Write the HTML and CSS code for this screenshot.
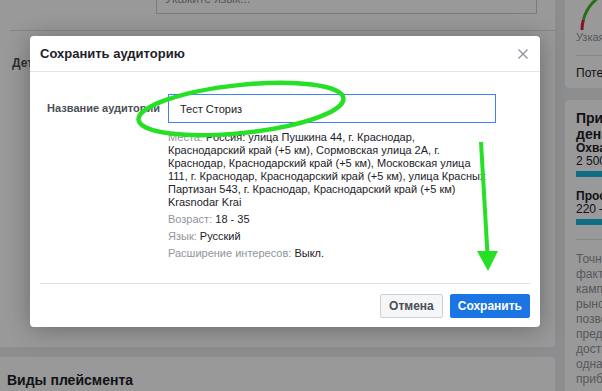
FILE: index.html
```html
<!DOCTYPE html>
<html lang="ru">
<head>
    <meta charset="UTF-8">
    <meta name="viewport" content="width=device-width, initial-scale=1.0">
    <title>Сохранить аудиторию</title>
    <link rel="stylesheet" href="styles.css">
</head>
<body>

    <div class="page">
        <div class="main-col">
            <div class="panel targeting">
                <div class="lang-input">Укажите язык...</div>
                <div class="divider"></div>
                <div class="section-title">Детальный таргетинг</div>
            </div>
            <div class="panel placements">
                <h3>Виды плейсмента</h3>
                <p>Подробный выбор плейсментов</p>
            </div>
        </div>

        <div class="side-col">
            <div class="panel side-top">
                <svg class="gauge" width="60" height="60" viewBox="0 0 60 60">
                    <path d="M17 60 A40 40 0 0 1 18.4 49.6" fill="none" stroke="#d8263b" stroke-width="3"/>
                    <path d="M18.4 49.6 A40 40 0 0 1 43 22.5" fill="none" stroke="#42b72a" stroke-width="3"/>
                </svg>
                <div class="gauge-label">Узкая</div>
                <div class="divider"></div>
                <div class="reach">Потенциальный охват: 1 400 человек</div>
            </div>
            <div class="panel side-est">
                <div class="est-title">Приблизительные результаты в<br>день</div>
                <div class="metric-name">Охват</div>
                <div class="metric-value">2 500 – 6 600</div>
                <div class="bar"></div>
                <div class="metric-name gap">Просмотры</div>
                <div class="metric-value">220 – 620</div>
                <div class="bar"></div>
                <div class="divider"></div>
                <p class="est-note">Точность приблизительных результатов<br>факторов, таких как данные о прошлых<br>кампаниях, бюджет и<br>рыночные условия. Эти данные<br>позволяют получить<br>представление о том, чего можно<br>достичь с вашим бюджетом,<br>однако это лишь<br>приблизительные<br>результаты.</p>
            </div>
        </div>
    </div>

    <!-- Modal -->
    <div class="backdrop"></div>
    <div class="modal">
        <div class="modal-head">
            <span class="modal-title">Сохранить аудиторию</span>
            <svg class="close" width="10" height="10" viewBox="0 0 10 10">
                <path d="M0.5 0.5 L9.5 9.5 M9.5 0.5 L0.5 9.5" stroke="#90949c" stroke-width="1.4"/>
            </svg>
        </div>
        <div class="modal-body">
            <label class="field-label" for="audienceName">Название аудитории</label>
            <div class="field">
                <input id="audienceName" class="text-input" type="text" value="Тест Сториз">
                <div class="summary">
                    <p class="locations"><span class="key">Места:</span> Россия: улица Пушкина 44, г. Краснодар,<br>Краснодарский край (+5 км), Сормовская улица 2А, г.<br>Краснодар, Краснодарский край (+5 км), Московская улица<br>111, г. Краснодар, Краснодарский край (+5 км), улица Красных<br>Партизан 543, г. Краснодар, Краснодарский край (+5 км)<br>Krasnodar Krai</p>
                    <p><span class="key">Возраст:</span> 18 - 35</p>
                    <p><span class="key">Язык:</span> Русский</p>
                    <p><span class="key">Расширение интересов:</span> Выкл.</p>
                </div>
            </div>
        </div>
        <div class="modal-foot">
            <button class="btn">Отмена</button>
            <button class="btn btn-primary">Сохранить</button>
        </div>
    </div>

    <!-- annotation marks -->
    <svg class="marks" width="602" height="391" viewBox="0 0 602 391">
        <ellipse cx="241" cy="109" rx="103" ry="24" transform="rotate(-6 241 109)" fill="none" stroke="#25e025" stroke-width="4.5"/>
        <line x1="481" y1="142" x2="487.5" y2="254" stroke="#25e025" stroke-width="4"/>
        <polygon points="477,251 498,251 488,271" fill="#25e025"/>
    </svg>

</body>
</html>
```

FILE: styles.css
```css
* { box-sizing: border-box; }
body {
    margin: 0;
    width: 602px;
    height: 391px;
    overflow: hidden;
    position: relative;
    background: #e9ebee;
    font-family: "Liberation Sans", Arial, sans-serif;
    color: #1d2129;
}

.page { display: flex; gap: 10px; margin: -30px 0 0 -10px; }
.main-col { width: 565px; flex: none; display: flex; flex-direction: column; gap: 10px; }
.side-col { width: 300px; flex: none; display: flex; flex-direction: column; gap: 12px; }
.panel { background: #fff; border-radius: 4px; }
.divider { height: 1px; background: #dddfe2; }

/* left column */
.targeting { height: 377px; padding: 12px 0 0 20px; }
.lang-input {
    margin-left: 146px;
    width: 381px;
    height: 32px;
    border: 1px solid #ccd0d5;
    padding: 9px 8px;
    font-size: 12px;
    color: #90949c;
}
.targeting .divider { margin-top: 16px; }
.section-title { margin: 24px 0 0 2px; font-size: 12px; line-height: 16px; font-weight: bold; color: #4b4f56; }

.placements { height: 60px; padding: 14px 0 0 17px; }
.placements h3 { margin: 0; font-size: 14px; line-height: 18px; }
.placements p { margin: 3px 0 0; font-size: 12px; }

/* right column */
.side-top { height: 118px; padding: 0 11px; }
.gauge { display: block; margin-left: -11px; }
.gauge-label { font-size: 11px; line-height: 14px; color: #90949c; }
.side-top .divider { margin-top: 11px; }
.reach { margin-top: 10px; font-size: 12px; line-height: 14px; }

.side-est { height: 320px; padding: 10px 11px; }
.est-title { font-size: 14px; line-height: 16px; font-weight: bold; }
.metric-name { font-size: 12px; line-height: 13px; font-weight: bold; }
.metric-name.gap { margin-top: 13px; }
.metric-value { font-size: 12px; line-height: 13px; }
.bar { margin-top: 3px; height: 6px; width: 180px; background: #1cb6e0; }
.side-est .divider { margin-top: 14px; }
.est-note { margin: 12px 0 0; font-size: 12px; line-height: 15px; color: #90949c; }

/* modal */
.backdrop { position: absolute; inset: 0; background: rgba(0, 0, 0, 0.4); }
.modal {
    position: absolute;
    left: 30px;
    top: 36px;
    width: 510px;
    height: 291px;
    background: #fff;
    border-radius: 4px;
    box-shadow: 0 2px 24px rgba(0, 0, 0, 0.3);
    display: flex;
    flex-direction: column;
}
.modal-head {
    height: 36px;
    padding: 0 12px 0 10px;
    border-bottom: 1px solid #e5e5e5;
    display: flex;
    align-items: center;
    justify-content: space-between;
}
.modal-title { font-size: 13px; font-weight: bold; color: #1d2129; }

.modal-body {
    flex: 1;
    padding: 22px 44px 0 10px;
    display: grid;
    grid-template-columns: 120px 1fr;
    column-gap: 8px;
    align-content: start;
}
.field-label { text-align: right; white-space: nowrap; line-height: 29px; font-size: 11px; font-weight: bold; color: #4b4f56; }
.text-input {
    display: block;
    width: 100%;
    height: 29px;
    margin: 0;
    border: 1px solid #4080ff;
    border-radius: 0;
    padding: 0 11px;
    font-family: inherit;
    font-size: 11px;
    color: #1d2129;
    outline: none;
}
.summary { margin-top: 8px; font-size: 11px; line-height: 13px; }
.summary p { margin: 4px 0 0; }
.summary p:first-child { margin-top: 0; }
.summary .locations { white-space: nowrap; }
.key { color: #90949c; }

.modal-foot {
    margin: 0 10px;
    padding: 10px 0 9px;
    border-top: 1px solid #dddfe2;
    display: flex;
    justify-content: flex-end;
    gap: 7px;
}
.btn {
    height: 24px;
    padding: 0 8px;
    border: 1px solid #ccd0d5;
    border-radius: 2px;
    background: #f5f6f7;
    font-family: inherit;
    font-size: 12px;
    font-weight: bold;
    color: #4b4f56;
}
.btn-primary { padding: 0 7px; border-color: #1b74e4; background: #1b74e4; color: #fff; }

.marks { position: absolute; left: 0; top: 0; pointer-events: none; }
```
